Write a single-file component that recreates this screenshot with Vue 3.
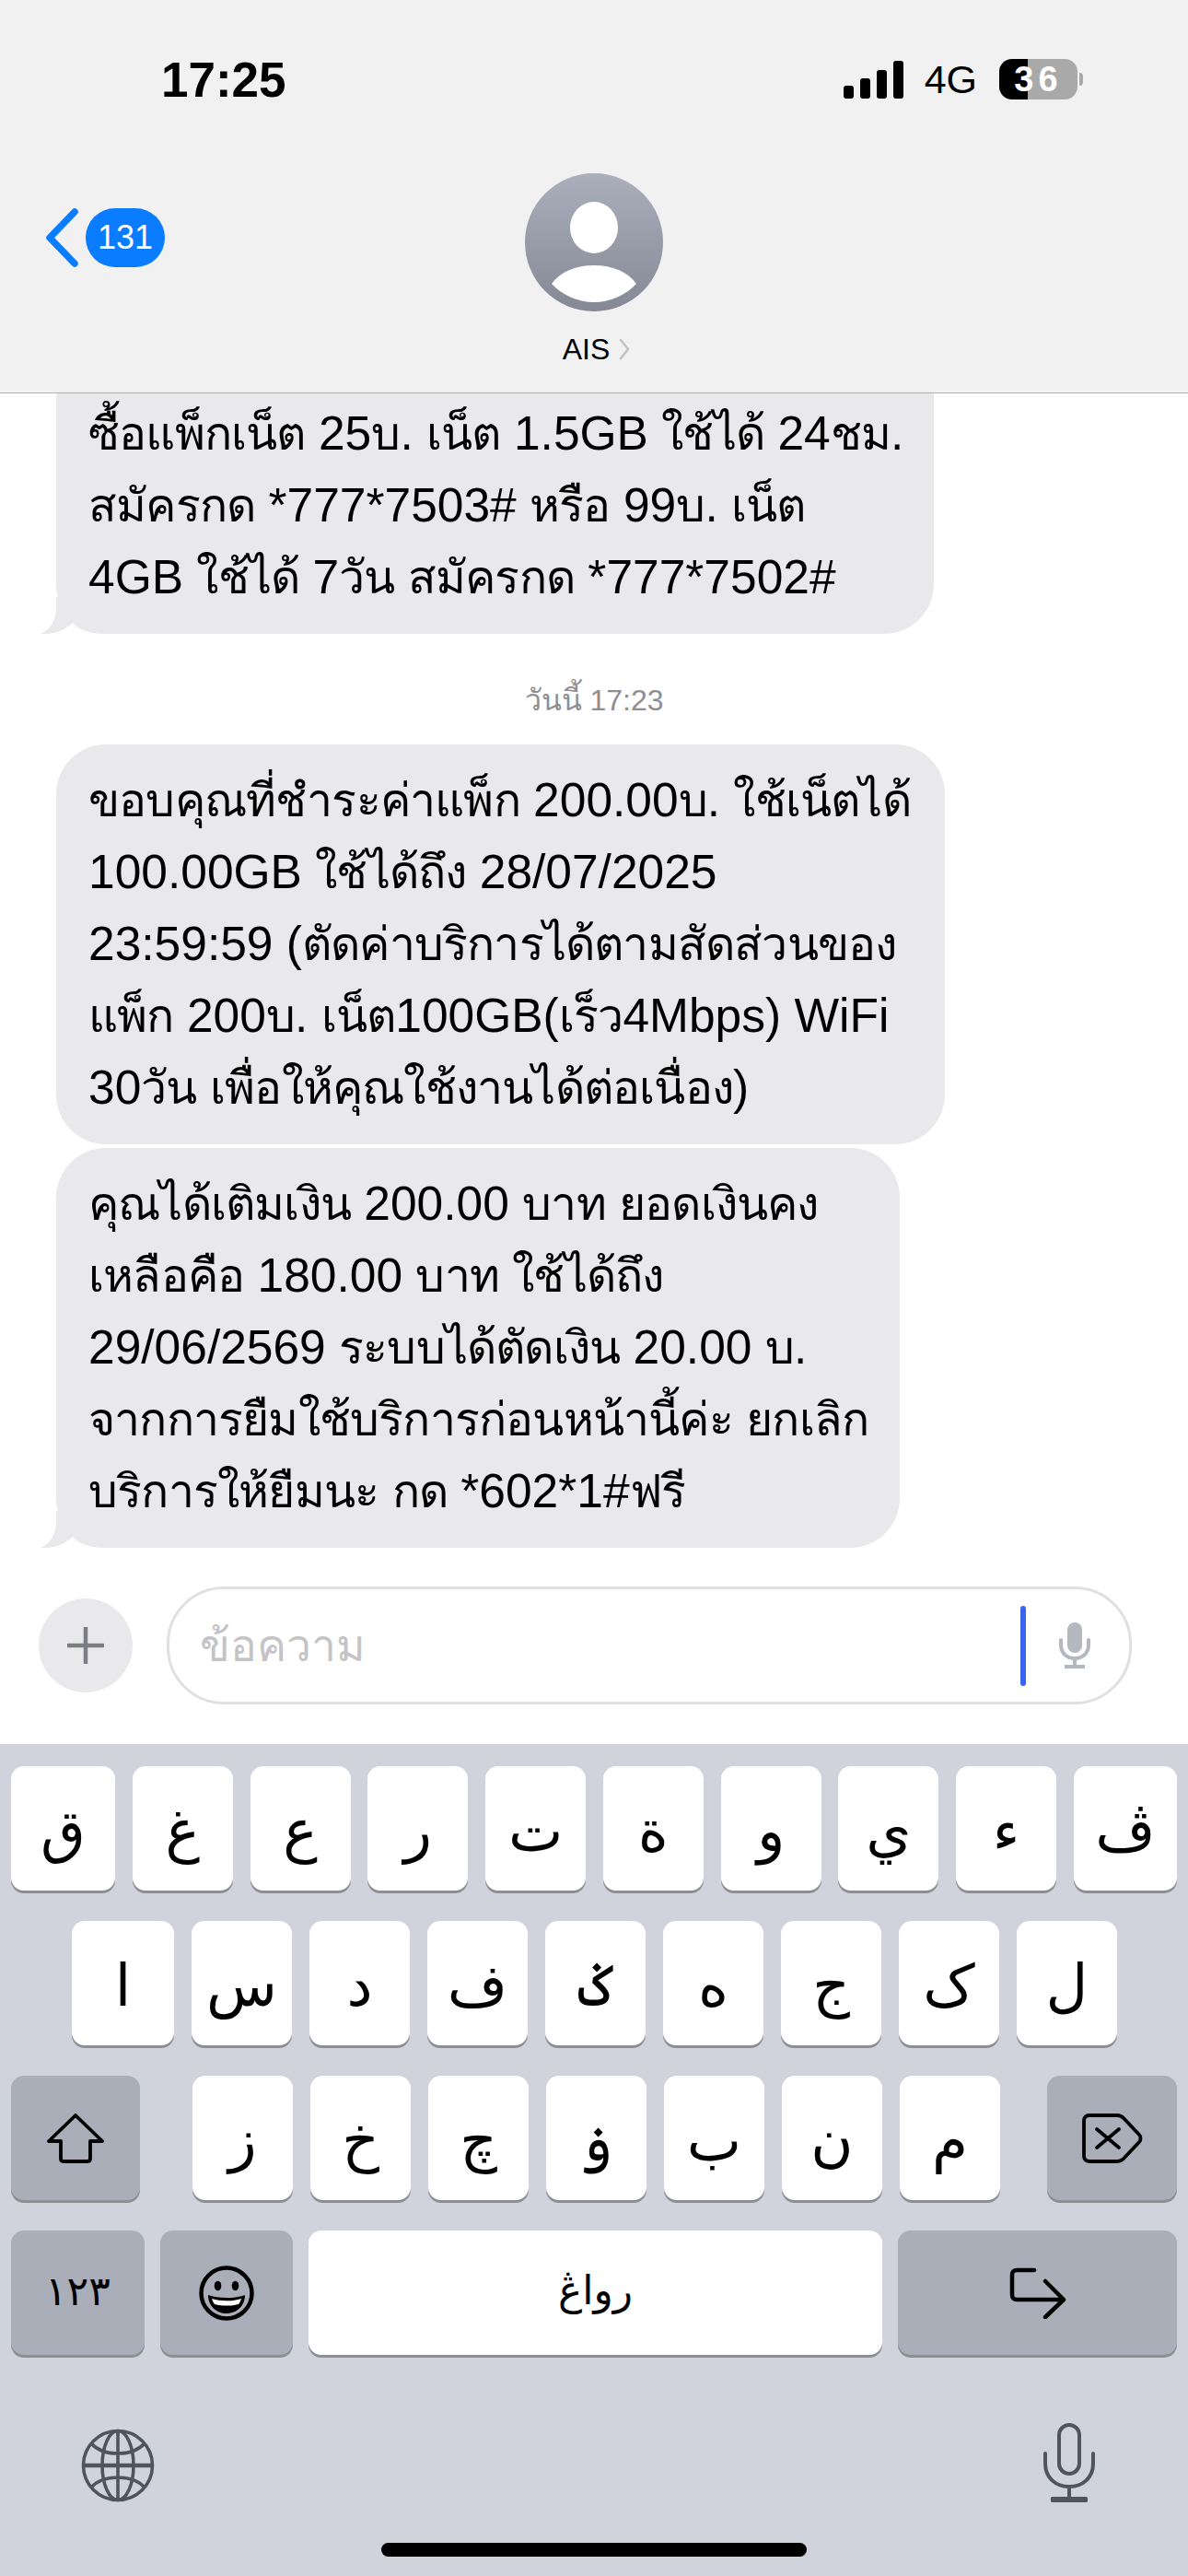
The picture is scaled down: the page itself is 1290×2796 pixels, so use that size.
<script setup>
const topRow = ['ق', 'غ', 'ع', 'ر', 'ت', 'ة', 'و', 'ي', 'ء', 'ڤ']
const midRow = ['ا', 'س', 'د', 'ف', 'ݢ', 'ه', 'ج', 'ک', 'ل']
const lowRow = ['ز', 'خ', 'چ', 'ۏ', 'ب', 'ن', 'م']

// Thai and latin runs get different tracking, so split each line
const toRuns = (line) =>
  line.match(/[\u0E00-\u0E7F]+|[^\u0E00-\u0E7F]+/g).map((text) => ({
    text,
    thai: /[\u0E00-\u0E7F]/.test(text)
  }))

const firstMessage = [
  'ซื้อแพ็กเน็ต 25บ. เน็ต 1.5GB ใช้ได้ 24ชม.',
  'สมัครกด *777*7503# หรือ 99บ. เน็ต',
  '4GB ใช้ได้ 7วัน สมัครกด *777*7502#'
].map(toRuns)
const secondMessage = [
  'ขอบคุณที่ชำระค่าแพ็ก 200.00บ. ใช้เน็ตได้',
  '100.00GB ใช้ได้ถึง 28/07/2025',
  '23:59:59 (ตัดค่าบริการได้ตามสัดส่วนของ',
  'แพ็ก 200บ. เน็ต100GB(เร็ว4Mbps) WiFi',
  '30วัน เพื่อให้คุณใช้งานได้ต่อเนื่อง)'
].map(toRuns)
const thirdMessage = [
  'คุณได้เติมเงิน 200.00 บาท ยอดเงินคง',
  'เหลือคือ 180.00 บาท ใช้ได้ถึง',
  '29/06/2569 ระบบได้ตัดเงิน 20.00 บ.',
  'จากการยืมใช้บริการก่อนหน้านี้ค่ะ ยกเลิก',
  'บริการให้ยืมนะ กด *602*1#ฟรี'
].map(toRuns)
</script>

<template>
  <div class="phone">
    <header class="head">
      <div class="status">
        <span class="clock">17:25</span>
        <div class="status__right">
          <div class="signal">
            <i class="b1"></i><i class="b2"></i><i class="b3"></i><i class="b4"></i>
          </div>
          <span class="net">4G</span>
          <div class="battery"><span>36</span></div>
          <i class="battery__nub"></i>
        </div>
      </div>
      <div class="nav">
        <div class="nav__back">
          <svg class="chevron" viewBox="0 0 36 64" width="36" height="64">
            <path d="M32 4 L5 32 L32 60" fill="none" stroke="#0a7cff" stroke-width="7.5" stroke-linecap="round" stroke-linejoin="round" />
          </svg>
          <span class="badge">131</span>
        </div>
        <div class="contact">
          <svg viewBox="0 0 150 150" width="150" height="150">
            <defs>
              <linearGradient id="avatarFill" x1="0" y1="0" x2="0" y2="1">
                <stop offset="0" stop-color="#aaafbb" />
                <stop offset="1" stop-color="#858995" />
              </linearGradient>
            </defs>
            <circle cx="75" cy="75" r="75" fill="url(#avatarFill)" />
            <ellipse cx="75" cy="59" rx="26" ry="28" fill="#fff" />
            <path d="M29 120 C38 107 55 100 75 100 C95 100 112 107 121 120 C110 132 93 140 75 140 C57 140 40 132 29 120 Z" fill="#fff" />
          </svg>
          <div class="contact__name">
            <span>AIS</span>
            <svg viewBox="0 0 12 24" width="12" height="24">
              <path d="M2 2 L10 12 L2 22" fill="none" stroke="#c0c0c4" stroke-width="2.4" stroke-linecap="round" stroke-linejoin="round" />
            </svg>
          </div>
        </div>
        <div></div>
      </div>
    </header>

    <section class="thread">
      <div class="bubble bubble--a">
        <div v-for="(line, i) in firstMessage" :key="i">
          <span v-for="(run, j) in line" :key="j" :class="run.thai ? 'thai' : 'latin'">{{ run.text }}</span>
        </div>
        <svg class="tail" viewBox="0 0 70 40" width="70" height="40">
          <path d="M17 0 V13 C16.5 26 10 36 0 40 C12 40.5 24 38 35 28 C42 36 54 40 69 40 L69 0 Z" fill="#e9e9eb" />
        </svg>
      </div>
      <div class="stamp">วันนี้ 17:23</div>
      <div class="bubble bubble--b">
        <div v-for="(line, i) in secondMessage" :key="i">
          <span v-for="(run, j) in line" :key="j" :class="run.thai ? 'thai' : 'latin'">{{ run.text }}</span>
        </div>
      </div>
      <div class="bubble bubble--c">
        <div v-for="(line, i) in thirdMessage" :key="i">
          <span v-for="(run, j) in line" :key="j" :class="run.thai ? 'thai' : 'latin'">{{ run.text }}</span>
        </div>
        <svg class="tail" viewBox="0 0 70 40" width="70" height="40">
          <path d="M17 0 V13 C16.5 26 10 36 0 40 C12 40.5 24 38 35 28 C42 36 54 40 69 40 L69 0 Z" fill="#e9e9eb" />
        </svg>
      </div>
    </section>

    <div class="composer">
      <div class="plus">
        <svg viewBox="0 0 40 40" width="40" height="40">
          <path d="M20 1 V39 M1 20 H39" stroke="#7c7d82" stroke-width="4.5" stroke-linecap="round" />
        </svg>
      </div>
      <div class="field">
        <span class="placeholder">ข้อความ</span>
        <i class="caret"></i>
        <svg class="field__mic" viewBox="0 0 34 50" width="34" height="50">
          <rect x="9" y="0" width="16" height="33" rx="8" fill="#b4b8bf" />
          <path d="M2 19 V24 C2 33 8 39 17 39 C26 39 32 33 32 24 V19" fill="none" stroke="#b4b8bf" stroke-width="4" stroke-linecap="round" />
          <path d="M17 39 V47 M6 48 H28" stroke="#b4b8bf" stroke-width="4" />
        </svg>
      </div>
    </div>

    <div class="keyboard">
      <div class="row row--top">
        <div v-for="k in topRow" :key="k" class="key">{{ k }}</div>
      </div>
      <div class="row row--mid">
        <div v-for="k in midRow" :key="k" class="key">{{ k }}</div>
      </div>
      <div class="row row--low">
        <div class="key key--dark key--shift">
          <svg viewBox="0 0 62 54" width="62" height="54">
            <path d="M31 2 L60 30 H47 V49 C47 51 46 52 44 52 H18 C16 52 15 51 15 49 V30 H2 Z" fill="none" stroke="#000" stroke-width="3.8" stroke-linejoin="round" />
          </svg>
        </div>
        <div v-for="k in lowRow" :key="k" class="key">{{ k }}</div>
        <div class="key key--dark key--del">
          <svg viewBox="0 0 66 54" width="66" height="54">
            <path d="M8 2 H38 C41 2 43 3 45 5 L62 23 C64 25 64 29 62 31 L45 49 C43 51 41 52 38 52 H8 C4 52 2 50 2 46 V8 C2 4 4 2 8 2 Z" fill="none" stroke="#000" stroke-width="3.8" />
            <path d="M16 17 L40 37 M40 17 L16 37" stroke="#000" stroke-width="3.8" stroke-linecap="round" />
          </svg>
        </div>
      </div>
      <div class="row row--bottom">
        <div class="key key--dark key--num">۱۲۳</div>
        <div class="key key--dark key--emoji">
          <svg viewBox="0 0 60 60" width="60" height="60">
            <circle cx="30" cy="30" r="27.5" fill="none" stroke="#000" stroke-width="4.5" />
            <ellipse cx="20.5" cy="22" rx="3.8" ry="5.2" />
            <ellipse cx="39.5" cy="22" rx="3.8" ry="5.2" />
            <path d="M10 32 C20 36 40 36 50 32 C50 44 41 52 30 52 C19 52 10 44 10 32 Z" />
            <path d="M14 36 C24 39 36 39 46 36 C45 39 44 41 43 42 C35 44 25 44 17 42 C16 41 15 39 14 36 Z" fill="#fff" />
          </svg>
        </div>
        <div class="key key--space">رواڠ</div>
        <div class="key key--dark key--return">
          <svg viewBox="0 0 62 56" width="62" height="56">
            <path d="M27 3 H8 C5 3 3 5 3 8 V30 C3 33 5 35 8 35 H58 M39 15 L59 35 L39 54" fill="none" stroke="#000" stroke-width="4.5" stroke-linecap="round" stroke-linejoin="round" />
          </svg>
        </div>
      </div>
      <div class="tools">
        <svg viewBox="0 0 80 80" width="80" height="80">
          <g fill="none" stroke="#50545e" stroke-width="3.6">
            <circle cx="40" cy="40" r="37.5" />
            <ellipse cx="40" cy="40" rx="17" ry="37.5" />
            <path d="M40 2 V78" />
            <path d="M2.5 40 H77.5" stroke-width="4.4" />
            <path d="M11 16 C18 24 28 27 40 27 C52 27 62 24 69 16" />
            <path d="M11 64 C18 56 28 53 40 53 C52 53 62 56 69 64" />
          </g>
        </svg>
        <svg viewBox="0 0 56 86" width="56" height="86">
          <g fill="none" stroke="#50545e" stroke-width="4">
            <rect x="17" y="2" width="22" height="53" rx="11" />
            <path d="M2 33 V44 C2 59 13 69 28 69 C43 69 54 59 54 44 V33" stroke-linecap="round" />
            <path d="M28 69 V82" />
          </g>
          <rect x="8" y="80" width="40" height="6" rx="1.5" fill="#50545e" />
        </svg>
      </div>
      <div class="homebar"></div>
    </div>
  </div>
</template>

<style>
html,
body {
  margin: 0;
  background: #fff;
}
</style>

<style scoped>
.phone {
  width: 1290px;
  height: 2796px;
  display: flex;
  flex-direction: column;
  overflow: hidden;
  background: #fff;
  color: #000;
  font-family: "Liberation Sans", "Noto Sans", "DejaVu Sans", sans-serif;
}

.head {
  height: 427px;
  box-sizing: border-box;
  flex: none;
  background: #f1f1f2;
  border-bottom: 1px solid #b2b2b2;
  position: relative;
  z-index: 2;
}

.status {
  height: 188px;
  box-sizing: border-box;
  padding: 59px 114px 0 175px;
  display: flex;
  justify-content: space-between;
  align-items: flex-start;
}

.clock {
  font-size: 53px;
  font-weight: 700;
  line-height: 56px;
}

.status__right {
  display: flex;
  align-items: center;
  margin-top: 5px;
}

.signal {
  display: flex;
  align-items: flex-end;
  gap: 7px;
  height: 41px;
  margin-right: 23px;
}

.signal i {
  width: 11px;
  border-radius: 3px;
  background: #000;
}

.b1 { height: 14px; }
.b2 { height: 22px; }
.b3 { height: 31px; }
.b4 { height: 41px; }

.net {
  font-size: 43px;
  line-height: 44px;
  margin-right: 24px;
}

.battery {
  width: 85px;
  height: 44px;
  border-radius: 14px;
  background: linear-gradient(90deg, #000 36%, #a9a9a9 36%);
  color: #fff;
  font-size: 38px;
  font-weight: 700;
  line-height: 44px;
  text-align: center;
  letter-spacing: 5px;
}

.battery__nub {
  width: 4px;
  height: 14px;
  margin-left: 2px;
  border-radius: 0 4px 4px 0;
  background: #a9a9a9;
}

.nav {
  display: grid;
  grid-template-columns: 1fr auto 1fr;
}

.nav__back {
  display: flex;
  align-items: flex-start;
  gap: 8px;
  padding: 38px 0 0 49px;
}

.badge {
  width: 86px;
  height: 64px;
  border-radius: 32px;
  background: #0a7cff;
  color: #fff;
  font-size: 36px;
  line-height: 64px;
  text-align: center;
}

.contact {
  display: flex;
  flex-direction: column;
  align-items: center;
}

.contact__name {
  display: flex;
  align-items: center;
  gap: 10px;
  margin-top: 24px;
  margin-left: 5px;
  font-size: 32px;
  line-height: 34px;
}

.thread {
  flex: 1;
  min-height: 0;
  display: flex;
  flex-direction: column;
  justify-content: flex-end;
  align-items: flex-start;
  padding: 0 0 42px 61px;
  overflow: hidden;
}

.bubble {
  position: relative;
  flex: none;
  box-sizing: border-box;
  padding: 22px 0 22px 35px;
  border-radius: 54px;
  background: #e9e9eb;
  font-size: 50px;
  line-height: 78px;
  white-space: nowrap;
}

.thai {
  font-size: 50px;
  line-height: 50px;
  letter-spacing: -0.8px;
}

.latin {
  font-size: 51.5px;
  line-height: 50px;
}

.bubble--a {
  width: 953px;
  padding-top: 100px;
}

.bubble--b {
  width: 965px;
  margin-bottom: 4px;
}

.bubble--c {
  width: 916px;
}

.tail {
  position: absolute;
  left: -17px;
  bottom: 0;
}

.stamp {
  align-self: center;
  margin-left: -61px;
  height: 120px;
  font-size: 32px;
  line-height: 144px;
  color: #8e8e93;
}

.composer {
  flex: none;
  display: flex;
  align-items: center;
  gap: 37px;
  padding: 0 61px 43px 42px;
}

.plus {
  width: 102px;
  height: 102px;
  flex: none;
  display: flex;
  align-items: center;
  justify-content: center;
  border-radius: 50%;
  background: #e9e9eb;
}

.field {
  flex: 1;
  height: 128px;
  box-sizing: border-box;
  display: flex;
  align-items: center;
  padding: 0 42px 0 33px;
  border: 3px solid #e0e0e2;
  border-radius: 62px;
}

.placeholder {
  font-size: 48px;
  color: #c4c4c6;
}

.caret {
  width: 6px;
  height: 87px;
  margin-left: auto;
  border-radius: 3px;
  background: #3a63ee;
}

.field__mic {
  margin-left: 36px;
}

.keyboard {
  flex: none;
  height: 903px;
  box-sizing: border-box;
  padding-top: 24px;
  display: flex;
  flex-direction: column;
  background: #d0d3db;
}

.row {
  display: flex;
  height: 138px;
  margin-bottom: 30px;
  padding: 0 12px;
}

.row--top {
  justify-content: space-between;
}

.row--top .key {
  width: 109px;
}

.row--top .key:first-child {
  width: 113px;
}

.row--top .key:last-child {
  width: 112px;
}

.row--mid {
  gap: 19px;
  padding-left: 78px;
}

.row--mid .key,
.row--low .key {
  width: 109px;
}

.row--mid .key:first-child {
  width: 111px;
}

.row--low {
  gap: 19px;
}

.key {
  height: 135px;
  box-sizing: border-box;
  display: flex;
  align-items: center;
  justify-content: center;
  padding-top: 6px;
  border-radius: 14px;
  background: #fff;
  box-shadow: 0 3px 0 #8c8e94;
  font-family: "DejaVu Sans", sans-serif;
  font-size: 63px;
  line-height: 1;
}

.key--dark {
  background: #a9aeb9;
  padding-top: 0;
}

.row--low .key--shift {
  width: 140px;
  margin-right: 38px;
}

.row--low .key--del {
  width: 141px;
  margin-left: 32px;
}

.row--bottom {
  gap: 17px;
  margin-bottom: 0;
}

.key--num {
  width: 145px;
  font-size: 44px;
  padding-bottom: 4px;
}

.key--emoji {
  width: 144px;
}

.key--space {
  width: 624px;
  font-size: 44px;
  padding-top: 0;
  padding-bottom: 6px;
}

.key--return {
  width: 303px;
}

.tools {
  display: flex;
  justify-content: space-between;
  align-items: flex-end;
  padding: 71px 101px 0 88px;
}

.homebar {
  width: 462px;
  height: 15px;
  margin: 44px auto 0;
  border-radius: 8px;
  background: #000;
}
</style>
